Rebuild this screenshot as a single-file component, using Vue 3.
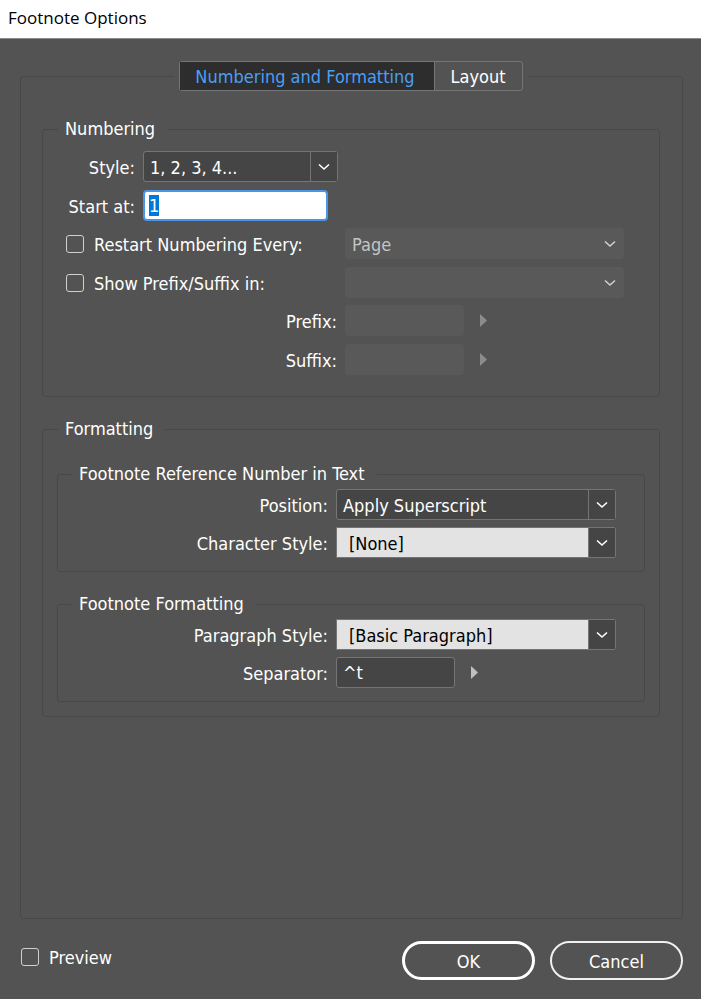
<script setup>
import { onMounted, ref } from 'vue'

const tab = ref('numbering')
const style = ref('1, 2, 3, 4...')
const startAt = ref('1')
const restart = ref(false)
const showAffix = ref(false)
const preview = ref(false)
const separator = ref('^t')
const startInput = ref(null)

onMounted(() => {
  startInput.value.focus()
  startInput.value.select()
})
</script>

<template>
  <div class="dialog">
    <header class="title-bar">
      <h1>Footnote Options</h1>
    </header>

    <form class="body" @submit.prevent>
      <fieldset class="panel">
        <legend class="tabs-legend">
          <span class="tabs" role="tablist">
            <button type="button" role="tab" class="tab tab-wide" :class="{ active: tab === 'numbering' }" :aria-selected="tab === 'numbering'" @click="tab = 'numbering'">Numbering and Formatting</button>
            <button type="button" role="tab" class="tab" :class="{ active: tab === 'layout' }" :aria-selected="tab === 'layout'" @click="tab = 'layout'">Layout</button>
          </span>
        </legend>

        <fieldset class="group numbering">
          <legend>Numbering</legend>
          <div class="rows loose">
            <div class="row lead">
              <label for="style">Style:</label>
              <div class="select style-select">
                <select id="style" v-model="style">
                  <option>1, 2, 3, 4...</option>
                </select>
                <span class="arrow"><svg viewBox="0 0 14 8"><path d="M2 1.5 L7 6 L12 1.5" /></svg></span>
              </div>
            </div>
            <div class="row lead">
              <label for="start">Start at:</label>
              <input id="start" ref="startInput" v-model="startAt" class="field start" type="text" />
            </div>
          </div>
          <div class="rows loose">
            <div class="row split">
              <span class="check">
                <input id="restart" v-model="restart" type="checkbox" />
                <label for="restart">Restart Numbering Every:</label>
              </span>
              <div class="select disabled">
                <select aria-label="Restart interval" disabled>
                  <option>Page</option>
                </select>
                <span class="arrow"><svg viewBox="0 0 14 8"><path d="M2 1.5 L7 6 L12 1.5" /></svg></span>
              </div>
            </div>
            <div class="row split">
              <span class="check">
                <input id="affix" v-model="showAffix" type="checkbox" />
                <label for="affix">Show Prefix/Suffix in:</label>
              </span>
              <div class="select disabled">
                <select aria-label="Prefix and suffix location" disabled>
                  <option></option>
                </select>
                <span class="arrow"><svg viewBox="0 0 14 8"><path d="M2 1.5 L7 6 L12 1.5" /></svg></span>
              </div>
            </div>
          </div>
          <div class="rows loose">
            <div v-for="name in ['Prefix', 'Suffix']" :key="name" class="row split">
              <label :for="name">{{ name }}:</label>
              <div class="with-menu">
                <input :id="name" class="field" type="text" disabled />
                <button type="button" class="more" :aria-label="name + ' menu'" disabled>
                  <svg viewBox="0 0 7 13"><path d="M0 0 L7 6.5 L0 13 Z" /></svg>
                </button>
              </div>
            </div>
          </div>
        </fieldset>

        <fieldset class="group formatting">
          <legend>Formatting</legend>

          <fieldset class="group sub">
            <legend>Footnote Reference Number in Text</legend>
            <div class="rows">
              <div class="row split">
                <label for="position">Position:</label>
                <div class="select">
                  <select id="position">
                    <option>Apply Superscript</option>
                  </select>
                  <span class="arrow"><svg viewBox="0 0 14 8"><path d="M2 1.5 L7 6 L12 1.5" /></svg></span>
                </div>
              </div>
              <div class="row split">
                <label for="char">Character Style:</label>
                <div class="select light">
                  <select id="char">
                    <option>[None]</option>
                  </select>
                  <span class="arrow"><svg viewBox="0 0 14 8"><path d="M2 1.5 L7 6 L12 1.5" /></svg></span>
                </div>
              </div>
            </div>
          </fieldset>

          <fieldset class="group sub">
            <legend>Footnote Formatting</legend>
            <div class="rows">
              <div class="row split">
                <label for="para">Paragraph Style:</label>
                <div class="select light">
                  <select id="para">
                    <option>[Basic Paragraph]</option>
                  </select>
                  <span class="arrow"><svg viewBox="0 0 14 8"><path d="M2 1.5 L7 6 L12 1.5" /></svg></span>
                </div>
              </div>
              <div class="row split">
                <label for="separator">Separator:</label>
                <div class="with-menu">
                  <input id="separator" v-model="separator" class="field" type="text" />
                  <button type="button" class="more" aria-label="Separator menu">
                    <svg viewBox="0 0 7 13"><path d="M0 0 L7 6.5 L0 13 Z" /></svg>
                  </button>
                </div>
              </div>
            </div>
          </fieldset>
        </fieldset>
      </fieldset>

      <footer class="footer">
        <span class="check">
          <input id="preview" v-model="preview" type="checkbox" />
          <label for="preview">Preview</label>
        </span>
        <div class="actions">
          <button type="submit" class="pill primary">OK</button>
          <button type="button" class="pill">Cancel</button>
        </div>
      </footer>
    </form>
  </div>
</template>

<style>
body {
  background: #535353;
}
</style>

<style scoped>
.dialog,
.dialog * {
  box-sizing: border-box;
}

.dialog {
  display: flex;
  flex-direction: column;
  min-height: 100vh;
  background: #535353;
  color: #fff;
  font-family: "DejaVu Sans Condensed", "DejaVu Sans", sans-serif;
  font-stretch: condensed;
  font-size: 18px;
  line-height: 24px;
}

.title-bar {
  height: 39px;
  padding: 6px 8px;
  background: #fff;
  border-bottom: 1px solid #8a8f8d;
}

h1 {
  margin: 0;
  color: #000;
  font-family: "Open Sans", "Noto Sans", sans-serif;
  font-stretch: normal;
  font-size: 17px;
  font-weight: 400;
  line-height: 24px;
}

.body {
  display: flex;
  flex: 1;
  flex-direction: column;
  padding: 22px 18px 19px 20px;
}

fieldset {
  min-width: 0;
  margin: 0;
  border: 1px solid #484848;
  border-radius: 3px;
}

.panel {
  flex: 1;
  padding: 26px 22px 22px 21px;
}

.tabs-legend {
  margin: 0 auto;
  padding: 0 5px;
}

.tabs {
  display: flex;
  height: 30px;
  border: 1px solid #757575;
  border-radius: 3px;
}

button,
input,
select {
  margin: 0;
  font: inherit;
  color: inherit;
}

.tab {
  padding: 2px 16px 0;
  border: 0;
  background: transparent;
  line-height: 24px;
}

.tab-wide {
  padding: 2px 19px 0 15px;
  border-right: 1px solid #757575;
}

.tab.active {
  background: #2d2d2d;
  color: #4a9ff5;
}

.group {
  padding: 0;
}

.group > legend {
  margin-left: 15px;
  padding: 0 12px 0 7px;
}

.numbering {
  display: flex;
  flex-direction: column;
  gap: 7px;
  padding: 10px 0 21px;
}

.formatting {
  margin-top: 20px;
  padding: 21px 14px 14px;
}

.formatting > legend {
  margin-left: 1px;
}

.sub {
  padding: 3px 0 13px;
}

.sub > legend {
  margin-left: 14px;
}

.sub + .sub {
  margin-top: 20px;
}

.rows {
  display: flex;
  flex-direction: column;
  gap: 7px;
}

.rows.loose {
  gap: 8px;
}

.row {
  display: grid;
  align-items: center;
  column-gap: 8px;
}

.row > label {
  padding-top: 2px;
  text-align: right;
}

.lead {
  grid-template-columns: 92px 1fr;
}

.split {
  grid-template-columns: 1fr 279px;
  padding: 0 35px 0 23px;
}

.sub .split {
  grid-template-columns: 1fr 280px;
  padding: 0 28px 0 23px;
}

.select {
  position: relative;
  height: 31px;
}

.style-select {
  width: 195px;
}

select {
  display: block;
  appearance: none;
  width: 100%;
  height: 31px;
  padding: 2px 34px 0 6px;
  border: 1px solid #757575;
  border-radius: 3px;
  background: #454545;
  opacity: 1;
}

.arrow {
  position: absolute;
  inset: 1px 1px 1px auto;
  display: flex;
  align-items: center;
  justify-content: center;
  width: 27px;
  border-left: 1px solid #757575;
  background: #454545;
  pointer-events: none;
}

.arrow svg {
  width: 14px;
  height: 8px;
  fill: none;
  stroke: #fff;
  stroke-width: 1.6;
}

.light select {
  padding-left: 12px;
  border-radius: 0 3px 3px 0;
  background: #e3e3e3;
  color: #000;
}

.disabled select {
  border-color: #595959;
  background: #595959;
  color: #c4c4c4;
}

.disabled .arrow {
  border-color: transparent;
  background: transparent;
}

.disabled .arrow svg {
  stroke: #d0d0d0;
}

.field {
  width: 119px;
  height: 31px;
  padding: 0 6px;
  border: 1px solid #757575;
  border-radius: 3px;
  background: #454545;
  outline: none;
}

.field:disabled {
  border-color: #595959;
  background: #595959;
}

.start {
  width: 185px;
  padding: 0 4px;
  border: 2px solid #4a96e6;
  border-radius: 4px;
  background: #fff;
  color: #000;
}

.start::selection {
  background: #0078d7;
  color: #fff;
}

.with-menu {
  display: flex;
  align-items: center;
}

.more {
  display: flex;
  padding: 0 16px;
  border: 0;
  background: transparent;
}

.more svg {
  width: 7px;
  height: 13px;
  fill: #c0c0c0;
}

.more:disabled svg {
  fill: #8c8c8c;
}

.check {
  display: flex;
  align-items: center;
  gap: 10px;
}

.check label {
  padding-top: 2px;
}

.check input {
  appearance: none;
  width: 18px;
  height: 18px;
  border: 1px solid #d0d0d0;
  border-radius: 3px;
}

.check input:checked {
  background: #4a9ff5;
}

.footer {
  display: flex;
  align-items: flex-start;
  justify-content: space-between;
  padding-top: 22px;
}

.footer .check {
  height: 31px;
  padding-left: 1px;
}

.actions {
  display: flex;
  gap: 15px;
}

.pill {
  width: 133px;
  height: 39px;
  padding: 2px 0 0;
  border: 2px solid #f0f0f0;
  border-radius: 20px;
  background: transparent;
}

.pill.primary {
  border: 3px solid #fff;
}
</style>
